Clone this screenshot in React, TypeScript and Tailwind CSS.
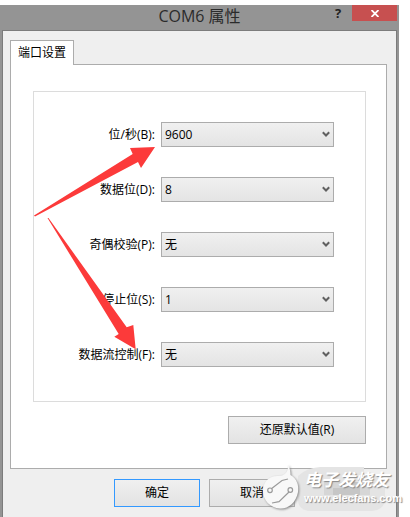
import React, { useState } from 'react';

const fields = [
  { id: 'baud', label: '位/秒(B):', options: ['9600', '19200', '38400', '115200'] },
  { id: 'data', label: '数据位(D):', options: ['8', '7', '6', '5'] },
  { id: 'parity', label: '奇偶校验(P):', options: ['无', '奇', '偶'] },
  { id: 'stop', label: '停止位(S):', options: ['1', '1.5', '2'] },
  { id: 'flow', label: '数据流控制(F):', options: ['无', '硬件', 'Xon / Xoff'] },
];

const buttonBase = 'h-7 border bg-linear-to-b from-[#f0f0f0] to-[#e3e3e3] hover:from-[#ecf4fc] hover:to-[#dcecfc]';

const PortField: React.FC<{ field: (typeof fields)[number] }> = ({ field }) => {
  const [value, setValue] = useState(field.options[0]);

  return (
    <div className="flex items-center gap-[6px]">
      <label htmlFor={field.id} className="w-[121px] shrink-0 text-right whitespace-nowrap">
        {field.label}
      </label>
      <div className="relative flex-1">
        <select
          id={field.id}
          value={value}
          onChange={(e) => setValue(e.target.value)}
          className="block w-full h-[25px] appearance-none border border-[#acacac] bg-linear-to-b from-[#f0f0f0] to-[#e4e4e4] pl-[3px] pr-5"
        >
          {field.options.map((o) => (
            <option key={o}>{o}</option>
          ))}
        </select>
        <svg className="pointer-events-none absolute right-1 top-[9px]" width="8" height="7" viewBox="0 0 8 7">
          <path d="M0.8 1.3 L4 4.5 L7.2 1.3" fill="none" stroke="#606060" strokeWidth="2" />
        </svg>
      </div>
    </div>
  );
};

const Arrows = () => (
  <svg className="pointer-events-none absolute left-0 top-[124px]" width="170" height="240" viewBox="0 124 170 240" fill="#fc3a3a">
    <path d="M34 210.5 L132.7 149 L130 143 L155 142 L141 163 L138 157 L35 211.5 Z" />
    <path d="M47.5 213 L118.7 329 L114.3 331.7 L135.7 344.3 L133.3 320 L126.7 322.3 L48.5 213 Z" />
  </svg>
);

// Site mark in the lower right corner, drawn over the buttons
const Watermark = () => (
  <div className="pointer-events-none absolute -right-[3px] bottom-[5px] flex gap-[2px] text-white">
    <svg
      className="absolute left-0 top-0 overflow-visible"
      width="140"
      height="48"
      viewBox="262 464 140 48"
    >
      <path d="M298 476 Q306 468 320 467 H364 V474 H372 L385 478 V500 Q384 510 372 511 H310 Q298 510 298 500 Z" fill="#e4e4e4" />
      <path d="M324 482 H370 V495 H324 Z" fill="#d6d6d6" />
      <path d="M333 488 H350 V495 H333 Z M346 482 H360 V495 H346 Z" fill="#c6c6c6" />
    </svg>
    <svg className="relative shrink-0 drop-shadow-[1px_1px_1px_#888888]" width="40" height="48" viewBox="262 464 40 48">
      <path d="M288 464.5 C290 469 290.5 472 290.5 475 C297 479 299 485 298 492 C296 503 288 509 280 508.5 C270 508 263 500 263 491 C263 482 269 475.5 278 476 C285 476 288.5 472 288 464.5 Z" fill="#f8f8f8" />
      <g fill="none" stroke="#9a9a9a" strokeWidth="1.2">
        <circle cx="270" cy="490.3" r="2.3" />
        <circle cx="290.3" cy="490" r="2.3" />
        <path d="M271.7 488.5 L282 480.5 L288 479" />
        <path d="M289 492 L279 501.7 L272 503" />
      </g>
    </svg>
    <div className="relative pt-1 [text-shadow:1px_1px_1px_#888888]">
      <p className="text-[17px] leading-6 font-bold italic">电子发烧友</p>
      <p className="font-['Liberation_Sans',sans-serif] text-[11px] leading-3 font-bold">www.elecfans.com</p>
    </div>
  </div>
);

const App: React.FC = () => {
  return (
    <div className="min-h-screen bg-white pt-[5px] pr-[11px] font-['Open_Sans','Noto_Sans_CJK_SC',sans-serif] text-xs text-black">
      <div className="relative flex min-h-[calc(100vh-5px)] flex-col bg-[#949494] px-[2px]">
        <header className="relative h-[25px] text-center">
          <h1 className="text-base leading-[22px] text-[#2b2b2b]">COM6 属性</h1>
          <div className="absolute right-0 top-0 flex">
            <button aria-label="帮助" className="h-4 w-7 text-[13px] leading-[14px] font-bold text-[#222]">?</button>
            <button aria-label="关闭" className="flex h-4 w-[45px] items-center justify-center bg-[#c75050]">
              <svg width="8" height="7" viewBox="0 0 8 7">
                <path d="M0.5 0 L7.5 7 M7.5 0 L0.5 7" stroke="#fff" strokeWidth="1.8" />
              </svg>
            </button>
          </div>
        </header>

        <main className="flex-1 border border-b-0 border-[#7c7c7c] bg-[#efefef] pl-[7px] pr-[9px] pt-[9px] pb-[10px]">
          <div role="tablist" className="flex">
            <button role="tab" aria-selected="true" className="relative -mb-px h-[25px] border border-b-0 border-[#acacac] bg-white px-[7px]">
              端口设置
            </button>
          </div>

          <section className="border border-[#acacac] bg-white pl-[22px] pr-[20px] pt-[26px] pb-6">
            <div className="flex flex-col gap-[30px] border border-[#dcdcdc] pt-[30px] pb-[34px] pr-[31px]">
              {fields.map((f) => (
                <PortField key={f.id} field={f} />
              ))}
            </div>
            <div className="mt-[14px] flex justify-end">
              <button className={`${buttonBase} w-[138px] border-[#acacac]`}>还原默认值(R)</button>
            </div>
          </section>

          <div className="mt-[10px] flex justify-end gap-[9px] pr-[92px]">
            <button className={`${buttonBase} w-[86px] border-[#3399ff]`}>确定</button>
            <button className={`${buttonBase} w-[86px] border-[#acacac]`}>取消</button>
          </div>
        </main>

        <Arrows />
        <Watermark />
      </div>
    </div>
  );
};

export default App;
